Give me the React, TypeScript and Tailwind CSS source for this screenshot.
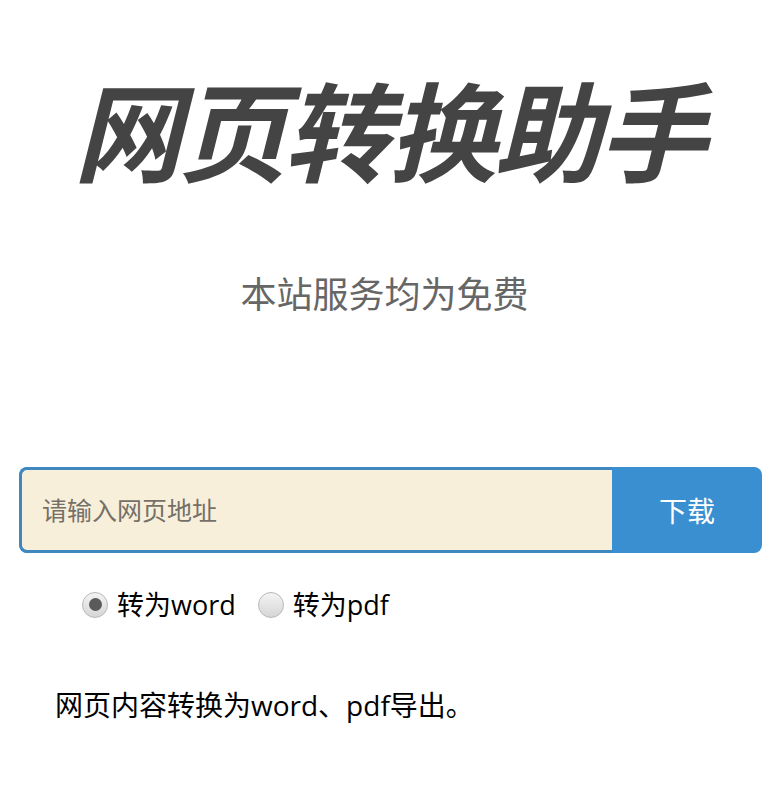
import { useState } from "react"

const cjk = { fontFamily: '"Noto Sans CJK SC", "Noto Sans", sans-serif' }
const mixed = { fontFamily: '"Open Sans", "Noto Sans CJK SC", sans-serif' }

function Radio({ checked, label, onClick }: { checked: boolean; label: string; onClick: () => void }) {
  return (
    <label className="flex items-center cursor-pointer" onClick={onClick}>
      <span className="w-[26px] h-[26px] rounded-full border border-[#b8b8b8] bg-gradient-to-b from-[#f4f4f4] to-[#d6d6d6] flex items-center justify-center">
        {checked && <span className="w-[13px] h-[13px] rounded-full bg-[#5a5a5a]" />}
      </span>
      <span className="ml-[9px] text-[27px] text-black leading-none" style={mixed}>
        {label}
      </span>
    </label>
  )
}

export default function App() {
  const [mode, setMode] = useState("word")
  return (
    <div className="w-[769px] h-[800px] bg-white overflow-hidden" style={cjk}>
      <h1 className="pt-[61px] pl-[8px] text-center text-[108px] leading-[132px] font-bold italic text-[#444444] tracking-[-3px]">
        网页转换助手
      </h1>
      <p className="mt-[74px] text-center text-[36px] leading-[50px] text-[#666666]">本站服务均为免费</p>

      <div className="mt-[150px] ml-[19px] mr-[7px] flex h-[86px] rounded-[8px] overflow-hidden bg-[#3a8fd0]">
        <div className="flex-1 border-[3px] border-r-0 border-[#3f88bf] rounded-l-[8px] bg-[#f8efdb] flex items-center pl-[20px]">
          <input
            className="w-full bg-transparent outline-none text-[25px] text-[#555] placeholder:text-[#757068]"
            placeholder="请输入网页地址"
          />
        </div>
        <button className="w-[150px] text-white text-[28px] flex items-center justify-center">下载</button>
      </div>

      <div className="mt-[38px] pl-[82px] flex items-center gap-[22px]">
        <Radio checked={mode === "word"} label="转为word" onClick={() => setMode("word")} />
        <Radio checked={mode === "pdf"} label="转为pdf" onClick={() => setMode("pdf")} />
      </div>

      <p className="mt-[73px] pl-[55px] text-[28px] text-black leading-none" style={mixed}>
        网页内容转换为word、pdf导出。
      </p>
    </div>
  )
}
